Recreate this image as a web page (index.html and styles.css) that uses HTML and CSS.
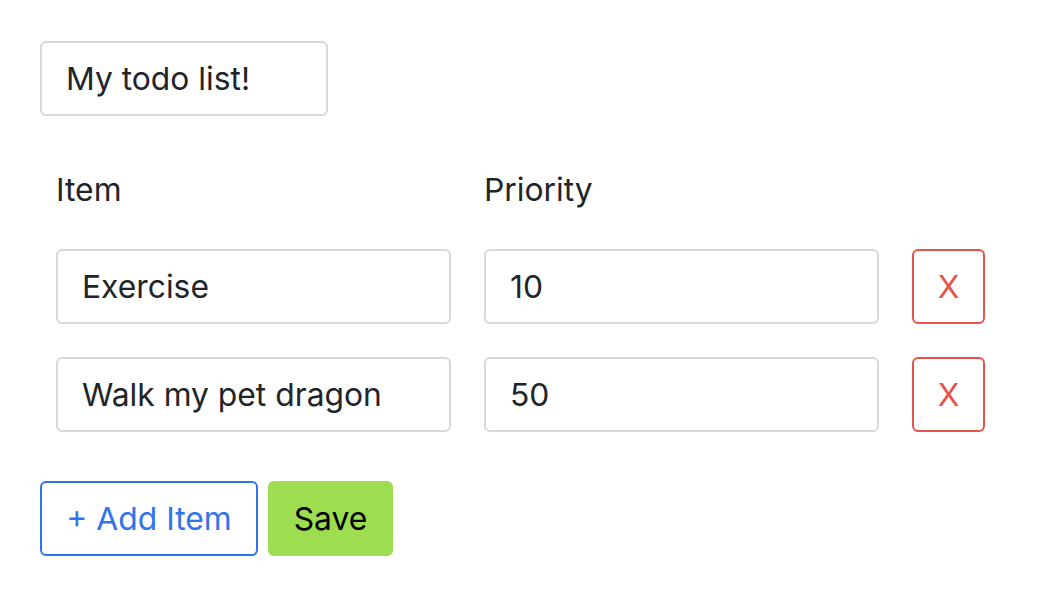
FILE: index.html
```html
<!DOCTYPE html>
<html>
<head>
<meta charset="utf-8">
<link rel="stylesheet" href="styles.css">
</head>
<body>
<div class="page">
  <input class="field title" type="text" value="My todo list!">
  <div class="table">
    <div class="label">Item</div>
    <div class="label">Priority</div>
    <div></div>
    <input class="field" type="text" value="Exercise">
    <input class="field" type="text" value="10">
    <button class="btn remove">X</button>
    <input class="field" type="text" value="Walk my pet dragon">
    <input class="field" type="text" value="50">
    <button class="btn remove">X</button>
  </div>
  <div class="actions">
    <button class="btn add">+ Add Item</button>
    <button class="btn save">Save</button>
  </div>
</div>
</body>
</html>
```

FILE: styles.css
```css
* { box-sizing: border-box; }
html, body { margin: 0; background: #fff; }
body {
  font-family: Inter, "Noto Sans", sans-serif;
  font-size: 31.8px;
  color: #212529;
}
.page {
  padding: 41px 0 0 40px;
  display: flex;
  flex-direction: column;
  align-items: flex-start;
}
.field {
  font-family: inherit;
  font-size: 31.8px;
  color: #212529;
  height: 75px;
  border: 2px solid #d5d8dc;
  border-radius: 6px;
  padding: 0 24px;
  background: #fff;
  outline: none;
}
.title { width: 288px; }
.table {
  margin-top: 51px;
  padding-left: 16px;
  display: grid;
  grid-template-columns: 395px 395px 73px;
  column-gap: 33px;
  row-gap: 33px;
  align-items: center;
}
.label {
  line-height: 45px;
  margin-bottom: 4px;
}
.table .field { width: 395px; }
.btn {
  font-family: inherit;
  font-size: 31.8px;
  height: 75px;
  border-radius: 6px;
  background: #fff;
  padding: 0;
  white-space: nowrap;
  cursor: pointer;
}
.remove {
  width: 73px;
  border: 2px solid #e5534b;
  color: #e5534b;
}
.actions {
  margin-top: 49px;
  display: flex;
  gap: 10px;
}
.add {
  width: 218px;
  border: 2px solid #2f74ec;
  color: #2f74ec;
}
.save {
  width: 125px;
  border: none;
  background: #9ddd50;
  color: #000;
}
```
